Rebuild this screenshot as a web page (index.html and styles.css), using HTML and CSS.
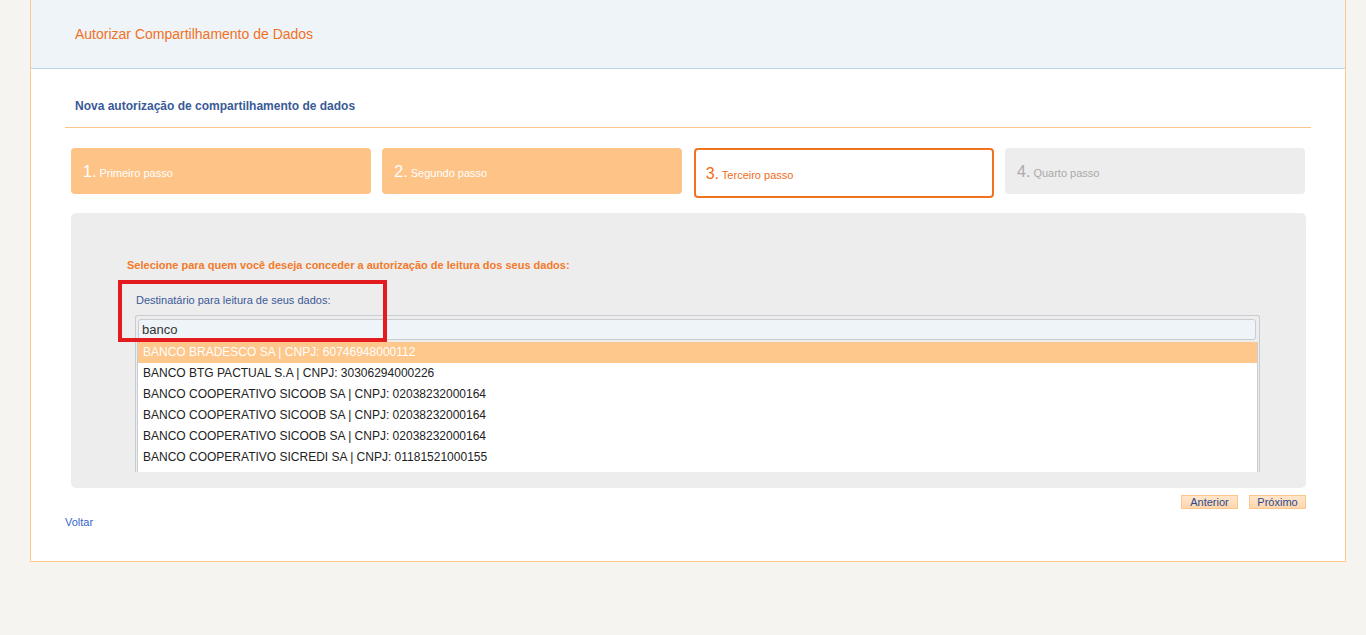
FILE: index.html
```html
<!DOCTYPE html>
<html lang="pt-BR">
<head>
<meta charset="utf-8">
<title>Autorizar Compartilhamento de Dados</title>
<link rel="stylesheet" href="styles.css">
</head>
<body>
<div class="page">
  <div class="page-header">
    <h1 class="page-title">Autorizar Compartilhamento de Dados</h1>
  </div>
  <div class="page-body">
    <h2 class="subtitle">Nova autorização de compartilhamento de dados</h2>
    <div class="steps">
      <div class="step step-done"><span class="step-num">1.</span> Primeiro passo</div>
      <div class="step step-done"><span class="step-num">2.</span> Segundo passo</div>
      <div class="step step-current"><span class="step-num">3.</span> Terceiro passo</div>
      <div class="step step-todo"><span class="step-num">4.</span> Quarto passo</div>
    </div>
    <div class="panel">
      <p class="panel-label">Selecione para quem você deseja conceder a autorização de leitura dos seus dados:</p>
      <div class="field">
        <label class="field-label">Destinatário para leitura de seus dados:</label>
        <div class="combo">
          <div class="combo-input">banco</div>
          <ul class="combo-list">
            <li class="combo-item active">BANCO BRADESCO SA | CNPJ: 60746948000112</li>
            <li class="combo-item">BANCO BTG PACTUAL S.A | CNPJ: 30306294000226</li>
            <li class="combo-item">BANCO COOPERATIVO SICOOB SA | CNPJ: 02038232000164</li>
            <li class="combo-item">BANCO COOPERATIVO SICOOB SA | CNPJ: 02038232000164</li>
            <li class="combo-item">BANCO COOPERATIVO SICOOB SA | CNPJ: 02038232000164</li>
            <li class="combo-item">BANCO COOPERATIVO SICREDI SA | CNPJ: 01181521000155</li>
          </ul>
        </div>
      </div>
      <div class="highlight-box"></div>
    </div>
    <div class="actions">
      <button class="btn">Anterior</button>
      <button class="btn">Próximo</button>
    </div>
    <a class="back-link" href="#">Voltar</a>
  </div>
</div>
</body>
</html>
```
FILE: styles.css
```css
* { box-sizing: border-box; }
html, body { margin: 0; padding: 0; }
body {
  background: #f5f4f0;
  font-family: "Liberation Sans", Arial, sans-serif;
  color: #333;
  height: 635px;
}
.page {
  margin-left: 30px;
  width: 1316px;
  background: #fff;
  border: 1px solid #fcc88e;
  border-top: none;
  height: 562px;
}
.page-header {
  background: #eff4f8;
  height: 69px;
  border-bottom: 1px solid #b9d7ea;
  padding: 26px 0 0 44px;
}
.page-title {
  margin: 0;
  font-size: 14px;
  font-weight: normal;
  color: #f2711f;
  line-height: 16px;
}
.page-body {
  padding: 0 34px;
}
.subtitle {
  margin: 0;
  padding: 29px 0 0 10px;
  height: 59px;
  font-size: 12px;
  font-weight: bold;
  color: #3a5a98;
  line-height: 16px;
  border-bottom: 1px solid #fcc68c;
}
.steps {
  display: grid;
  grid-template-columns: repeat(4, 300px);
  justify-content: space-between;
  align-items: start;
  margin: 20px 6px 0 6px;
}
.step {
  height: 46px;
  border-radius: 4px;
  padding: 14px 12px 0;
  font-size: 11px;
  line-height: 20px;
  white-space: nowrap;
}
.step-num {
  font-size: 16px;
}
.step-done {
  background: #fec386;
  color: #fff;
}
.step-current {
  height: 50px;
  background: #fff;
  border: 2px solid #f07322;
  color: #f06c1d;
  padding: 14px 10px 0;
}
.step-todo {
  background: #ededed;
  color: #aaa;
}
.panel {
  position: relative;
  margin: 15px 5px 0 6px;
  background: #ededed;
  border-radius: 5px;
  height: 275px;
  padding: 45px 46px 0 56px;
}
.panel-label {
  margin: 0;
  font-size: 11px;
  font-weight: bold;
  color: #f47a2a;
  line-height: 14px;
}
.field {
  padding: 21px 0 0 8px;
}
.field-label {
  display: block;
  font-size: 11px;
  color: #3a5a98;
  line-height: 14px;
  margin-left: 1px;
}
.combo {
  margin-top: 8px;
  border: 1px solid #c9cdd1;
  border-bottom: none;
  border-radius: 3px 3px 0 0;
  padding: 3px 3px 0 2px;
  background: #ededed;
}
.combo-input {
  height: 21px;
  background: #eff4f8;
  border: 1px solid #c9ccd0;
  border-radius: 3px;
  font-size: 13px;
  line-height: 19px;
  padding-left: 3px;
  color: #333;
}
.combo-list {
  list-style: none;
  margin: 2px -2px 0 -1px;
  padding: 0 0 4px;
  background: #fff;
  border-left: 1px solid #c9cdd1;
  border-right: 1px solid #c9cdd1;
}
.combo-item {
  height: 21px;
  line-height: 21px;
  font-size: 12px;
  padding-left: 5px;
  color: #222;
  white-space: nowrap;
}
.combo-item.active {
  background: #fec78b;
  color: #fff;
}
.highlight-box {
  position: absolute;
  left: 47px;
  top: 67px;
  width: 269px;
  height: 62px;
  border: 4px solid #e31b1e;
}
.actions {
  display: flex;
  justify-content: flex-end;
  gap: 11px;
  margin: 7px 5px 0 0;
}
.btn {
  font-family: "Liberation Sans", Arial, sans-serif;
  font-size: 11px;
  line-height: 12px;
  height: 14px;
  padding: 0 7px;
  border: 1px solid #fcc68c;
  background: linear-gradient(#ffe6cc, #fed6ad);
  color: #2b4a8f;
  cursor: pointer;
  min-width: 57px;
}
.back-link {
  display: inline-block;
  margin-top: 6px;
  font-size: 11px;
  color: #3366cc;
  text-decoration: none;
  line-height: 14px;
}
```
